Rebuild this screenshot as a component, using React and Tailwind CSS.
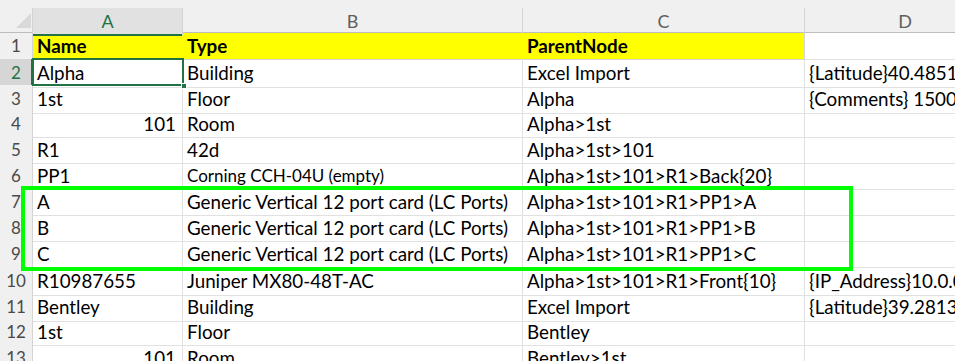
import React from "react";

const rows = [
  { n: 1, a: "Name", b: "Type", c: "ParentNode", d: "", header: true },
  { n: 2, a: "Alpha", b: "Building", c: "Excel Import", d: "{Latitude}40.48513" },
  { n: 3, a: "1st", b: "Floor", c: "Alpha", d: "{Comments} 1500 sq ft" },
  { n: 4, a: "101", b: "Room", c: "Alpha>1st", d: "", right: true },
  { n: 5, a: "R1", b: "42d", c: "Alpha>1st>101", d: "" },
  { n: 6, a: "PP1", b: "Corning CCH-04U (empty)", c: "Alpha>1st>101>R1>Back{20}", d: "", small: true },
  { n: 7, a: "A", b: "Generic Vertical 12 port card (LC Ports)", c: "Alpha>1st>101>R1>PP1>A", d: "" },
  { n: 8, a: "B", b: "Generic Vertical 12 port card (LC Ports)", c: "Alpha>1st>101>R1>PP1>B", d: "" },
  { n: 9, a: "C", b: "Generic Vertical 12 port card (LC Ports)", c: "Alpha>1st>101>R1>PP1>C", d: "" },
  { n: 10, a: "R10987655", b: "Juniper MX80-48T-AC", c: "Alpha>1st>101>R1>Front{10}", d: "{IP_Address}10.0.0.1" },
  { n: 11, a: "Bentley", b: "Building", c: "Excel Import", d: "{Latitude}39.28134" },
  { n: 12, a: "1st", b: "Floor", c: "Bentley", d: "" },
  { n: 13, a: "101", b: "Room", c: "Bentley>1st", d: "", right: true },
];

const font = { fontFamily: "Lato, 'Liberation Sans', sans-serif" };

export default function App() {
  return (
    <div className="relative w-[955px] h-[361px] overflow-hidden bg-white text-black" style={font}>
      {/* column header strip */}
      <div className="h-[8px] bg-[#f0f0f0]" />
      <div className="grid grid-cols-[33px_150px_340px_282px_200px] h-[25px] bg-[#f0f0f0] border-b border-[#bdbdbd] text-[18px] text-[#5f5f5f]">
        <div className="relative border-r border-[#d4d4d4]">
          <svg className="absolute left-[16px] top-[5px]" width="15" height="15" viewBox="0 0 15 15">
            <polygon points="15,0 15,15 0,15" fill="#d9d9d9" />
          </svg>
        </div>
        <div className="relative flex items-center justify-center bg-[#e1e1e1] border-r border-[#d4d4d4] text-[#217346]">
          A
          <div className="absolute left-0 right-0 bottom-[-1px] h-[2px] bg-[#217346]" />
        </div>
        <div className="flex items-center justify-center border-r border-[#d4d4d4]">B</div>
        <div className="flex items-center justify-center border-r border-[#d4d4d4]">C</div>
        <div className="flex items-center justify-center">D</div>
      </div>
      {rows.map((r) => (
        <div key={r.n} className="grid grid-cols-[33px_150px_340px_282px_200px] h-[26px] text-[18.8px]">
          <div
            className={
              "relative flex items-center justify-center border-r border-b border-[#d4d4d4] text-[17px] " +
              (r.n === 2 ? "bg-[#d6d6d6] text-[#217346]" : "bg-[#f0f0f0] text-[#4a4a4a]")
            }
          >
            {r.n}
            {r.n === 2 && <div className="absolute top-0 bottom-0 right-[-1px] w-[2px] bg-[#217346]" />}
          </div>
          <div
            className={
              "flex items-center px-[4px] whitespace-nowrap overflow-hidden " +
              (r.header ? "bg-[#ffff00] border-b border-[#d4d4d4] font-bold" : "border-r border-b border-[#e1e1e1]") +
              (r.right ? " justify-end pr-[6px]" : "")
            }
          >
            {r.a}
          </div>
          <div
            className={
              "flex items-center px-[4px] whitespace-nowrap overflow-hidden " +
              (r.header ? "bg-[#ffff00] border-b border-[#d4d4d4] font-bold" : "border-r border-b border-[#e1e1e1]") +
              (r.small ? " text-[17px]" : "")
            }
          >
            {r.b}
          </div>
          <div
            className={
              "flex items-center px-[4px] whitespace-nowrap overflow-hidden " +
              (r.header ? "bg-[#ffff00] border-r border-b border-[#d4d4d4] font-bold" : "border-r border-b border-[#e1e1e1]")
            }
          >
            {r.c}
          </div>
          <div className="flex items-center px-[4px] whitespace-nowrap overflow-visible border-b border-[#e1e1e1]">
            {r.d}
          </div>
        </div>
      ))}
      {/* selected cell A2 */}
      <div className="absolute left-[32px] top-[58px] w-[152px] h-[28px] border-2 border-[#217346]" />
      <div className="absolute left-[181px] top-[83px] w-[6px] h-[6px] bg-[#217346] border border-white" />
      {/* green highlight box */}
      <div className="absolute left-[21px] top-[186px] w-[832px] h-[85px] border-4 border-[#00ff00]" />
    </div>
  );
}
